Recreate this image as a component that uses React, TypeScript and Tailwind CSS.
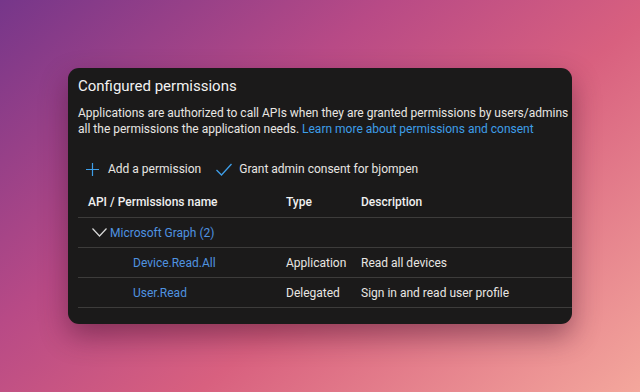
import React from 'react';

const font = { fontFamily: 'Roboto, "Liberation Sans", sans-serif' };

const rows = [
  { name: 'Device.Read.All', type: 'Application', desc: 'Read all devices' },
  { name: 'User.Read', type: 'Delegated', desc: 'Sign in and read user profile' },
];

const App: React.FC = () => {
  return (
    <div
      className="w-[640px] h-[392px] overflow-hidden bg-[linear-gradient(140deg,#76368a_0%,#b84a86_35%,#d8607f_60%,#f4a79c_100%)] pt-[68px] pl-[68px]"
      style={font}
    >
      <div className="w-[504px] h-[256px] rounded-[11px] bg-[#1b1a1a] shadow-[0_12px_28px_rgba(60,10,40,0.45)] overflow-hidden pl-[10px] pt-[8px] text-[#e8e6e3]">
        <h2 className="text-[15px] leading-[20px] font-normal text-[#f2f2f2] whitespace-nowrap">Configured permissions</h2>

        <div className="mt-[9px] text-[12px] leading-[16px] whitespace-nowrap">
          <p>Applications are authorized to call APIs when they are granted permissions by users/admins</p>
          <p>
            all the permissions the application needs.{' '}
            <span className="text-[#3e9ee8]">Learn more about permissions and consent</span>
          </p>
        </div>

        <div className="mt-[22px] flex items-center h-[20px] text-[12px] whitespace-nowrap">
          <svg className="ml-[8px] w-[13px] h-[13px]" viewBox="0 0 13 13" fill="none" stroke="#3e9ee8" strokeWidth={1.2}>
            <path d="M6.5 0V13M0 6.5H13" />
          </svg>
          <span className="ml-[9px]">Add a permission</span>
          <svg className="ml-[15px] w-[16px] h-[13px]" viewBox="0 0 16 13" fill="none" stroke="#3e9ee8" strokeWidth={1.3}>
            <path d="M0.5 7L5.5 12L15.5 1" />
          </svg>
          <span className="ml-[7px]">Grant admin consent for bjompen</span>
        </div>

        <div className="mt-[13px] flex items-center h-[20px] text-[12px] font-medium text-[#f0f0f0] whitespace-nowrap">
          <span className="pl-[10px] w-[208px]">API / Permissions name</span>
          <span className="w-[75px]">Type</span>
          <span>Description</span>
        </div>

        <div className="mt-[5px] border-t border-[#3d3c3b] h-[30px] flex items-center text-[12px] whitespace-nowrap">
          <svg className="ml-[14px] w-[15px] h-[9px]" viewBox="0 0 15 9" fill="none" stroke="#d8d8d8" strokeWidth={1.2}>
            <path d="M0.5 0.5L7.5 8L14.5 0.5" />
          </svg>
          <span className="ml-[3px] text-[#4f93e0]">Microsoft Graph (2)</span>
        </div>

        {rows.map((r) => (
          <div key={r.name} className="border-t border-[#3d3c3b] h-[30px] flex items-center text-[12px] whitespace-nowrap">
            <span className="pl-[55px] w-[208px] text-[#4f93e0]">{r.name}</span>
            <span className="w-[75px]">{r.type}</span>
            <span>{r.desc}</span>
          </div>
        ))}
        <div className="border-t border-[#3d3c3b]" />
      </div>
    </div>
  );
};

export default App;
